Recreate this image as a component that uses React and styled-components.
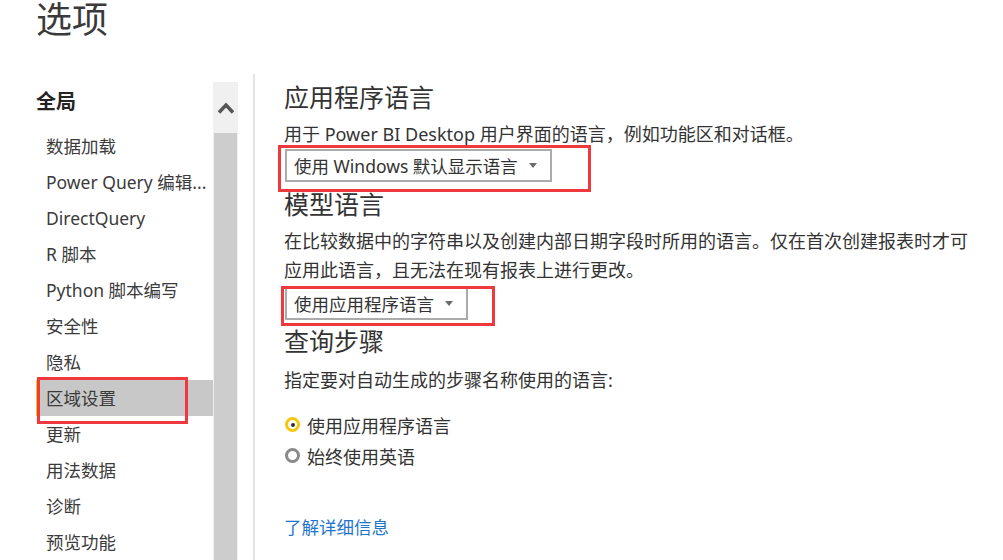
import React from "react";
import styled, { createGlobalStyle } from "styled-components";

const Global = createGlobalStyle`
  html, body { margin: 0; padding: 0; background: #fff; }
  body {
    font-family: "Noto Sans", "Noto Sans CJK SC", sans-serif;
    color: #333;
  }
`;

const Page = styled.div`
  width: 1003px;
  height: 560px;
  overflow: hidden;
  display: flex;
  flex-direction: column;
`;

const Title = styled.h1`
  margin: 0;
  padding-left: 36px;
  font-size: 36px;
  line-height: 40px;
  font-weight: 400;
  color: #3a3a3a;
`;

const Main = styled.div`
  margin-top: 34px;
  flex: 1;
  display: flex;
  min-height: 0;
`;

const Nav = styled.nav`
  width: 213px;
  padding: 8px 0 0 36px;
  box-sizing: border-box;
`;

const NavHeader = styled.div`
  font-size: 20px;
  line-height: 40px;
  font-weight: 700;
  color: #252423;
`;

const NavList = styled.ul`
  list-style: none;
  margin: 6px 0 0;
  padding: 0;
`;

const NavItem = styled.li`
  position: relative;
  height: 36px;
  line-height: 36px;
  font-size: 17.5px;
  padding-left: 9px;
  border-left: 1px solid ${(p) => (p.$active ? "#f2c811" : "transparent")};
  background: ${(p) => (p.$active ? "#c8c8c8" : "transparent")};
  color: #3b3b3b;
  white-space: nowrap;
`;

const Highlight = styled.span`
  position: absolute;
  border: 3px solid #ee3a3c;
  box-sizing: border-box;
  pointer-events: none;
  left: ${(p) => p.$l}px;
  top: ${(p) => p.$t}px;
  width: ${(p) => p.$w}px;
  height: ${(p) => p.$h}px;
`;

const ScrollTrack = styled.div`
  width: 25px;
  margin-top: 8px;
  background: #f0f0f0;
  display: flex;
  flex-direction: column;
  align-items: center;
`;

const ScrollButton = styled.div`
  height: 51px;
  width: 100%;
  display: flex;
  align-items: center;
  justify-content: center;
`;

const ScrollThumb = styled.div`
  flex: 1;
  width: 23px;
  background: #cdcdcd;
`;

const Divider = styled.div`
  width: 2px;
  margin-left: 15px;
  background: #e3e3e3;
`;

const Content = styled.section`
  padding-left: 29px;
  display: flex;
  flex-direction: column;
  align-items: flex-start;
`;

const Heading = styled.h2`
  margin: ${(p) => p.$mt}px 0 0;
  font-size: 25px;
  line-height: 36px;
  font-weight: 400;
  color: #333;
`;

const Desc = styled.p`
  margin: ${(p) => p.$mt}px 0 0;
  max-width: 692px;
  font-size: 18px;
  line-height: ${(p) => p.$lh || 26}px;
  color: #333;
`;

const Select = styled.div`
  position: relative;
  margin-top: ${(p) => p.$mt}px;
  margin-left: 1px;
  width: ${(p) => p.$w}px;
  height: 33px;
  box-sizing: border-box;
  border: 2px solid #ababab;
  display: flex;
  align-items: center;
  justify-content: space-between;
  padding: 0 13px 0 7px;
  font-size: 17.5px;
  color: #333;
  white-space: nowrap;
`;

const Caret = styled.span`
  width: 0;
  height: 0;
  border-left: 4px solid transparent;
  border-right: 4px solid transparent;
  border-top: 5px solid #6b6b6b;
`;

const RadioGroup = styled.div`
  margin-top: 16px;
  display: flex;
  flex-direction: column;
`;

const RadioRow = styled.label`
  display: flex;
  align-items: center;
  height: 31px;
  gap: 7px;
  font-size: 18px;
  color: #333;
`;

const RadioDot = styled.span`
  width: 15px;
  height: 15px;
  margin-left: 1px;
  box-sizing: border-box;
  border-radius: 50%;
  border: 3px solid ${(p) => (p.$checked ? "#f2c811" : "#8a8a8a")};
  display: flex;
  align-items: center;
  justify-content: center;
  &::after {
    content: "";
    width: 4px;
    height: 4px;
    border-radius: 50%;
    background: ${(p) => (p.$checked ? "#333" : "transparent")};
  }
`;

const Link = styled.a`
  margin-top: 43px;
  font-size: 17.5px;
  line-height: 26px;
  color: #1f74cc;
  text-decoration: none;
`;

const navItems = [
  "数据加载",
  "Power Query 编辑...",
  "DirectQuery",
  "R 脚本",
  "Python 脚本编写",
  "安全性",
  "隐私",
  "区域设置",
  "更新",
  "用法数据",
  "诊断",
  "预览功能",
];

export default function App() {
  return (
    <Page>
      <Global />
      <Title>选项</Title>
      <Main>
        <Nav>
          <NavHeader>全局</NavHeader>
          <NavList>
            {navItems.map((t) => (
              <NavItem key={t} $active={t === "区域设置"}>
                {t}
                {t === "区域设置" && <Highlight $l={0} $t={-3} $w={151} $h={47} />}
              </NavItem>
            ))}
          </NavList>
        </Nav>
        <ScrollTrack>
          <ScrollButton>
            <svg width="18" height="12" viewBox="0 0 18 12">
              <path d="M2 10.5 L9 3 L16 10.5" fill="none" stroke="#555" strokeWidth="3.4" />
            </svg>
          </ScrollButton>
          <ScrollThumb />
        </ScrollTrack>
        <Divider />
        <Content>
          <Heading $mt={5}>应用程序语言</Heading>
          <Desc $mt={6}>用于 Power BI Desktop 用户界面的语言，例如功能区和对话框。</Desc>
          <Select $mt={2} $w={267}>
            <span>使用 Windows 默认显示语言</span>
            <Caret />
            <Highlight $l={-9} $t={-6} $w={313} $h={47} />
          </Select>
          <Heading $mt={4}>模型语言</Heading>
          <Desc $mt={5} $lh={29}>
            在比较数据中的字符串以及创建内部日期字段时所用的语言。仅在首次创建报表时才可应用此语言，且无法在现有报表上进行更改。
          </Desc>
          <Select $mt={2} $w={183}>
            <span>使用应用程序语言</span>
            <Caret />
            <Highlight $l={-6} $t={-3} $w={214} $h={40} />
          </Select>
          <Heading $mt={3}>查询步骤</Heading>
          <Desc $mt={8}>指定要对自动生成的步骤名称使用的语言:</Desc>
          <RadioGroup>
            <RadioRow>
              <RadioDot $checked />
              使用应用程序语言
            </RadioRow>
            <RadioRow>
              <RadioDot />
              始终使用英语
            </RadioRow>
          </RadioGroup>
          <Link href="#">了解详细信息</Link>
        </Content>
      </Main>
    </Page>
  );
}
